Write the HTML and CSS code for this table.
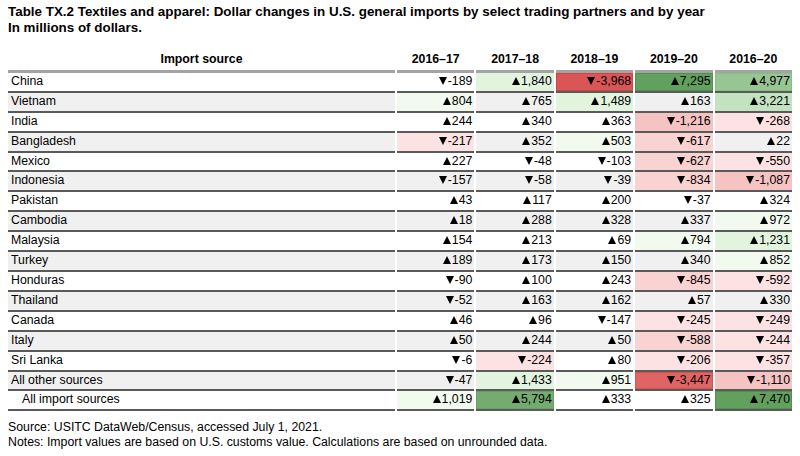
FILE: index.html
```html
<!DOCTYPE html>
<html lang="en">
<head>
<meta charset="utf-8">
<title>Table TX.2</title>
<link rel="stylesheet" href="styles.css">
</head>
<body>
<div class="title">
  <div>Table TX.2 Textiles and apparel: Dollar changes in U.S. general imports by select trading partners and by year</div>
  <div>In millions of dollars.</div>
</div>
<table class="data">
  <colgroup>
    <col class="col-src"><col><col><col><col><col>
  </colgroup>
  <thead>
    <tr><th>Import source</th><th>2016–17</th><th>2017–18</th><th>2018–19</th><th>2019–20</th><th>2016–20</th></tr>
  </thead>
  <tbody>
    <tr><td>China</td><td><i class="dn"></i>-189</td><td class="g1"><i class="up"></i>1,840</td><td class="r4"><i class="dn"></i>-3,968</td><td class="g4"><i class="up"></i>7,295</td><td class="g3"><i class="up"></i>4,977</td></tr>
    <tr><td>Vietnam</td><td class="g0"><i class="up"></i>804</td><td><i class="up"></i>765</td><td class="g1"><i class="up"></i>1,489</td><td><i class="up"></i>163</td><td class="g2"><i class="up"></i>3,221</td></tr>
    <tr><td>India</td><td><i class="up"></i>244</td><td><i class="up"></i>340</td><td><i class="up"></i>363</td><td class="r2"><i class="dn"></i>-1,216</td><td class="r0"><i class="dn"></i>-268</td></tr>
    <tr><td>Bangladesh</td><td class="r0"><i class="dn"></i>-217</td><td><i class="up"></i>352</td><td class="g0"><i class="up"></i>503</td><td class="r1"><i class="dn"></i>-617</td><td><i class="up"></i>22</td></tr>
    <tr><td>Mexico</td><td><i class="up"></i>227</td><td><i class="dn"></i>-48</td><td><i class="dn"></i>-103</td><td class="r1"><i class="dn"></i>-627</td><td class="r0"><i class="dn"></i>-550</td></tr>
    <tr><td>Indonesia</td><td><i class="dn"></i>-157</td><td><i class="dn"></i>-58</td><td><i class="dn"></i>-39</td><td class="r1"><i class="dn"></i>-834</td><td class="r2"><i class="dn"></i>-1,087</td></tr>
    <tr><td>Pakistan</td><td><i class="up"></i>43</td><td><i class="up"></i>117</td><td><i class="up"></i>200</td><td><i class="dn"></i>-37</td><td><i class="up"></i>324</td></tr>
    <tr><td>Cambodia</td><td><i class="up"></i>18</td><td><i class="up"></i>288</td><td><i class="up"></i>328</td><td><i class="up"></i>337</td><td class="g0"><i class="up"></i>972</td></tr>
    <tr><td>Malaysia</td><td><i class="up"></i>154</td><td><i class="up"></i>213</td><td><i class="up"></i>69</td><td class="g0"><i class="up"></i>794</td><td class="g1"><i class="up"></i>1,231</td></tr>
    <tr><td>Turkey</td><td><i class="up"></i>189</td><td><i class="up"></i>173</td><td><i class="up"></i>150</td><td><i class="up"></i>340</td><td class="g0"><i class="up"></i>852</td></tr>
    <tr><td>Honduras</td><td><i class="dn"></i>-90</td><td><i class="up"></i>100</td><td><i class="up"></i>243</td><td class="r1"><i class="dn"></i>-845</td><td class="r0"><i class="dn"></i>-592</td></tr>
    <tr><td>Thailand</td><td><i class="dn"></i>-52</td><td><i class="up"></i>163</td><td><i class="up"></i>162</td><td><i class="up"></i>57</td><td><i class="up"></i>330</td></tr>
    <tr><td>Canada</td><td><i class="up"></i>46</td><td><i class="up"></i>96</td><td><i class="dn"></i>-147</td><td class="r0"><i class="dn"></i>-245</td><td class="r0"><i class="dn"></i>-249</td></tr>
    <tr><td>Italy</td><td><i class="up"></i>50</td><td><i class="up"></i>244</td><td><i class="up"></i>50</td><td class="r1"><i class="dn"></i>-588</td><td class="r0"><i class="dn"></i>-244</td></tr>
    <tr><td>Sri Lanka</td><td><i class="dn"></i>-6</td><td class="r0"><i class="dn"></i>-224</td><td><i class="up"></i>80</td><td class="r0"><i class="dn"></i>-206</td><td class="r0"><i class="dn"></i>-357</td></tr>
    <tr><td>All other sources</td><td><i class="dn"></i>-47</td><td class="g1"><i class="up"></i>1,433</td><td class="g0"><i class="up"></i>951</td><td class="r3"><i class="dn"></i>-3,447</td><td class="r2"><i class="dn"></i>-1,110</td></tr>
    <tr class="total"><td>All import sources</td><td class="g0"><i class="up"></i>1,019</td><td class="g3b"><i class="up"></i>5,794</td><td><i class="up"></i>333</td><td><i class="up"></i>325</td><td class="g4"><i class="up"></i>7,470</td></tr>
  </tbody>
</table>
<div class="notes">
  <div>Source: USITC DataWeb/Census, accessed July 1, 2021.</div>
  <div>Notes: Import values are based on U.S. customs value. Calculations are based on unrounded data.</div>
</div>
</body>
</html>
```

FILE: styles.css
```css
html, body {
  background: #ffffff;
}
body {
  margin: 0;
  padding: 4px 8px 0 8px;
  font-family: "Liberation Sans", Arial, sans-serif;
  color: #000;
}
.title {
  font-weight: bold;
  font-size: 13.4px;
  line-height: 16px;
}
.data {
  margin: 14px -2px 0 -2px;
  width: calc(100% + 4px);
  table-layout: fixed;
  border-collapse: separate;
  border-spacing: 2px 0;
  font-size: 12.3px;
}
.col-src {
  width: 387px;
}
.data th {
  font-weight: bold;
  text-align: center;
  line-height: 17.9px;
  padding: 1px 0 1px 0;
  border-bottom: 3px solid #a3a3a3;
}
.data td {
  line-height: 17.9px;
  padding: 0 2px 0 3px;
  text-align: right;
  border-bottom: 2px solid #5a5a5a;
  white-space: nowrap;
}
.data td:first-child {
  text-align: left;
}
.data tbody tr:nth-child(even) td {
  background: #f0f0f0;
}
.data tr.total td:first-child {
  padding-left: 14px;
}
.up, .dn {
  display: inline-block;
  width: 0;
  height: 0;
  border-left: 4.5px solid transparent;
  border-right: 4.5px solid transparent;
  margin-right: 1px;
  vertical-align: baseline;
}
.up {
  border-bottom: 8.5px solid #000;
}
.dn {
  border-top: 8.5px solid #000;
}
.data td.g0 { background: #f2faf0 !important; }
.data td.g1 { background: #e2f3de !important; }
.data td.g2 { background: #c3e2bf !important; }
.data td.g3 { background: #97c693 !important; box-shadow: inset 0 0 0 1px #8abd86; }
.data td.g3b { background: #74ac70 !important; box-shadow: inset 0 0 0 1px #66a262; }
.data td.g4 { background: #62a05e !important; box-shadow: inset 0 0 0 1px #519150; }
.data td.r0 { background: #fce2e2 !important; }
.data td.r1 { background: #f9d2d2 !important; }
.data td.r2 { background: #f6c3c3 !important; }
.data td.r3 { background: #e16464 !important; box-shadow: inset 0 0 0 1px #d85050; }
.data td.r4 { background: #da5656 !important; box-shadow: inset 0 0 0 1px #d04444; }
.notes {
  margin-top: 9px;
  font-size: 12.3px;
  line-height: 15px;
}
```
